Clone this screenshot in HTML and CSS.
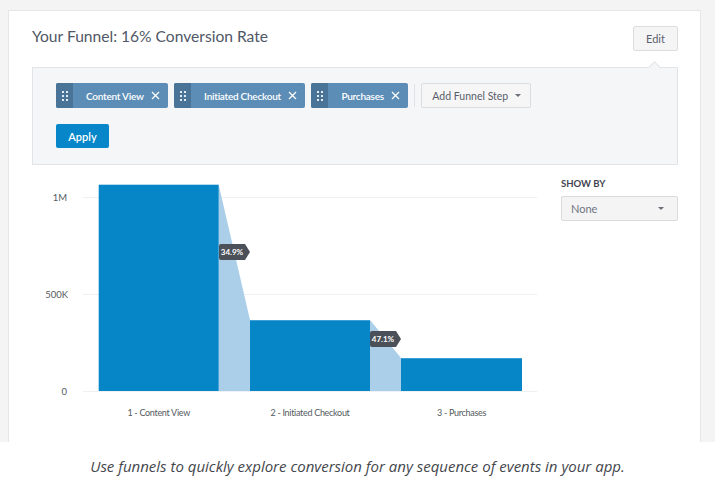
FILE: index.html
```html
<!DOCTYPE html>
<html>
<head>
<meta charset="utf-8">
<link rel="stylesheet" href="styles.css">
</head>
<body>
<div class="app">
  <div class="card">
    <div class="header">
      <h1 class="title">Your Funnel: 16% Conversion Rate</h1>
      <button class="btn-edit">Edit</button>
    </div>
    <div class="panel">
      <div class="steps">
        <div class="chip">
          <span class="handle"><svg width="6" height="10" viewBox="0 0 6 10"><g fill="#fff" opacity="0.85"><rect x="0" y="0" width="2" height="2"/><rect x="4" y="0" width="2" height="2"/><rect x="0" y="4" width="2" height="2"/><rect x="4" y="4" width="2" height="2"/><rect x="0" y="8" width="2" height="2"/><rect x="4" y="8" width="2" height="2"/></g></svg></span>
          <span class="chip-label">Content View</span>
          <svg class="chip-x" width="9" height="9" viewBox="0 0 9 9"><path d="M1 1L8 8M8 1L1 8" stroke="#fff" stroke-width="1.3"/></svg>
        </div>
        <div class="chip">
          <span class="handle"><svg width="6" height="10" viewBox="0 0 6 10"><g fill="#fff" opacity="0.85"><rect x="0" y="0" width="2" height="2"/><rect x="4" y="0" width="2" height="2"/><rect x="0" y="4" width="2" height="2"/><rect x="4" y="4" width="2" height="2"/><rect x="0" y="8" width="2" height="2"/><rect x="4" y="8" width="2" height="2"/></g></svg></span>
          <span class="chip-label">Initiated Checkout</span>
          <svg class="chip-x" width="9" height="9" viewBox="0 0 9 9"><path d="M1 1L8 8M8 1L1 8" stroke="#fff" stroke-width="1.3"/></svg>
        </div>
        <div class="chip">
          <span class="handle"><svg width="6" height="10" viewBox="0 0 6 10"><g fill="#fff" opacity="0.85"><rect x="0" y="0" width="2" height="2"/><rect x="4" y="0" width="2" height="2"/><rect x="0" y="4" width="2" height="2"/><rect x="4" y="4" width="2" height="2"/><rect x="0" y="8" width="2" height="2"/><rect x="4" y="8" width="2" height="2"/></g></svg></span>
          <span class="chip-label">Purchases</span>
          <svg class="chip-x" width="9" height="9" viewBox="0 0 9 9"><path d="M1 1L8 8M8 1L1 8" stroke="#fff" stroke-width="1.3"/></svg>
        </div>
        <span class="sep"></span>
        <button class="btn-add">Add Funnel Step <span class="caret"></span></button>
      </div>
      <button class="btn-apply">Apply</button>
    </div>
    <div class="chart-row">
      <svg class="chart" width="505" height="270" viewBox="0 0 505 270">
        <g stroke="#eef0f3" stroke-width="1">
          <line x1="51" y1="32.5" x2="505" y2="32.5"/>
          <line x1="51" y1="129.5" x2="505" y2="129.5"/>
          <line x1="51" y1="226.5" x2="505" y2="226.5"/>
        </g>
        <g class="axis" text-anchor="end">
          <text x="35" y="35.5">1M</text>
          <text x="36" y="132.5">500K</text>
          <text x="35" y="230">0</text>
        </g>
        <polygon points="186.7,19.7 218,155 218,226 186.7,226" fill="#abcfe9"/>
        <polygon points="338,155 369,193 369,226 338,226" fill="#abcfe9"/>
        <rect x="66.7" y="19.7" width="120" height="206.3" fill="#0685c7"/>
        <rect x="218" y="155" width="120" height="71" fill="#0685c7"/>
        <rect x="369" y="193" width="121" height="33" fill="#0685c7"/>
        <line x1="218" y1="155.5" x2="338" y2="155.5" stroke="#3d9fd5" stroke-width="1"/>
        <line x1="369" y1="193.5" x2="490" y2="193.5" stroke="#3d9fd5" stroke-width="1"/>
        <path d="M187 81a2 2 0 0 1 2-2H213l5 8-5 8H189a2 2 0 0 1-2-2z" fill="#4b5059"/>
        <text class="badge" x="200" y="90" text-anchor="middle">34.9%</text>
        <path d="M338 168a2 2 0 0 1 2-2H364l5 8-5 8H340a2 2 0 0 1-2-2z" fill="#4b5059"/>
        <text class="badge" x="351" y="177" text-anchor="middle">47.1%</text>
        <g class="axis xlab" text-anchor="middle">
          <text x="126.7" y="250.5">1 - Content View</text>
          <text x="278" y="250.5">2 - Initiated Checkout</text>
          <text x="429.5" y="250.5">3 - Purchases</text>
        </g>
      </svg>
      <div class="side">
        <div class="side-label">SHOW BY</div>
        <div class="select"><span>None</span><span class="caret"></span></div>
      </div>
    </div>
  </div>
</div>
<p class="caption">Use funnels to quickly explore conversion for any sequence of events in your app.</p>
</body>
</html>
```
FILE: styles.css
```css
* { box-sizing: border-box; }
html, body { margin: 0; padding: 0; background: #fff; }
body { font-family: Lato, "Open Sans", sans-serif; }

.app {
  background: #f4f4f4;
  height: 442px;
  padding: 10px 14px 0 8px;
}
.card {
  background: #fff;
  border: 1px solid #e6e6e6;
  border-bottom: none;
  height: 432px;
  overflow: hidden;
  padding: 15px 22px 0 23px;
}
.header {
  display: flex;
  justify-content: space-between;
  align-items: flex-start;
}
.title {
  margin: 0;
  font-size: 15.6px;
  line-height: 20px;
  font-weight: 400;
  color: #505766;
}
.btn-edit {
  width: 45px;
  height: 25px;
  background: #f5f5f6;
  border: 1px solid #dcdddf;
  border-radius: 2px;
  font-family: Lato, sans-serif;
  font-size: 11px;
  color: #5b6170;
  padding: 0;
}
.panel {
  position: relative;
  margin-top: 16px;
  background: #f5f6f8;
  border: 1px solid #e2e4e7;
  padding: 15px 23px 16px 23px;
}
.panel::before {
  content: "";
  position: absolute;
  top: -5px;
  left: 617px;
  width: 8px;
  height: 8px;
  background: #f5f6f8;
  border-top: 1px solid #e2e4e7;
  border-left: 1px solid #e2e4e7;
  transform: rotate(45deg);
}
.steps {
  display: flex;
  align-items: center;
  gap: 6.5px;
  height: 25px;
}
.chip {
  display: flex;
  align-items: center;
  height: 25px;
  background: #5b8db6;
  border-radius: 2px;
  overflow: hidden;
  color: #fff;
  padding-right: 8px;
}
.handle {
  width: 17px;
  height: 25px;
  background: #497497;
  display: flex;
  align-items: center;
  justify-content: center;
}
.chip-label {
  font-size: 10px;
  font-weight: 600;
  margin-left: 13px;
  letter-spacing: -0.25px;
}
.chip-x { margin-left: 7px; }
.sep {
  width: 1px;
  height: 23px;
  background: #e0e2e5;
  margin: 0 0 0 -0.5px;
}
.btn-add {
  height: 25px;
  padding: 0 9px 0 10px;
  background: #f6f6f7;
  border: 1px solid #dcdde0;
  border-radius: 2px;
  font-family: Lato, sans-serif;
  font-size: 10.5px;
  color: #585d68;
  display: flex;
  align-items: center;
  gap: 7px;
}
.caret {
  width: 0;
  height: 0;
  border-left: 3px solid transparent;
  border-right: 3px solid transparent;
  border-top: 3px solid #6a6f78;
}
.btn-apply {
  display: block;
  margin-top: 16px;
  width: 53px;
  height: 24px;
  background: #0787c9;
  border: none;
  border-radius: 2px;
  color: #fff;
  font-family: Lato, sans-serif;
  font-size: 11px;
  font-weight: 600;
  padding: 0;
}
.chart-row {
  display: flex;
  align-items: flex-start;
}
.chart { display: block; flex: none; }
.axis {
  font-family: Lato, sans-serif;
  font-size: 9.5px;
  fill: #555a60;
}
.xlab {
  font-size: 9px;
  letter-spacing: -0.3px;
}
.badge {
  font-family: Lato, sans-serif;
  font-size: 8px;
  font-weight: 700;
  fill: #fff;
}
.side {
  margin-left: 24px;
  flex: 1;
  padding-top: 13px;
}
.side-label {
  font-size: 9.5px;
  font-weight: 700;
  color: #3f4450;
  line-height: 12px;
}
.select {
  margin-top: 6px;
  height: 25px;
  background: #f4f4f5;
  border: 1px solid #d9dbde;
  border-radius: 2px;
  display: flex;
  align-items: center;
  justify-content: space-between;
  padding: 0 13px 0 9px;
  font-size: 11px;
  color: #6f7480;
}
.caption {
  margin: 0;
  height: 47px;
  display: flex;
  align-items: center;
  justify-content: center;
  font-family: "Open Sans", sans-serif;
  font-style: italic;
  font-size: 15px;
  color: #44474d;
}
```
